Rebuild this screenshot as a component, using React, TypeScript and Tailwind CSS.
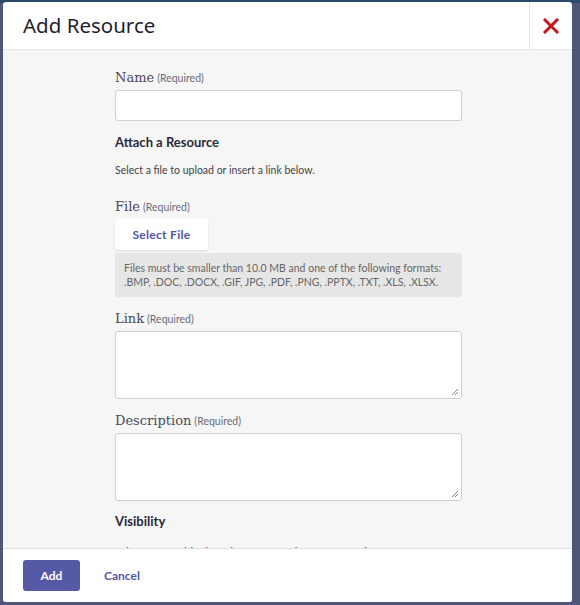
import React from "react";

const Label = ({ text }: { text: string }) => (
  <div className="flex items-baseline gap-[3px] text-[#4a4a55]">
    <span className="text-[13px]" style={{ fontFamily: '"DejaVu Serif", "Liberation Serif", serif' }}>
      {text}
    </span>
    <span className="text-[10.5px] text-[#6b6b78]">(Required)</span>
  </div>
);

const Resize = () => (
  <svg width="8" height="8" viewBox="0 0 8 8" className="absolute right-[2px] bottom-[2px]">
    <path d="M7 1 L1 7 M7 4 L4 7" stroke="#888" strokeWidth="1" />
  </svg>
);

export default function App() {
  return (
    <div
      className="w-[580px] h-[605px] bg-[#4f5677] overflow-hidden relative"
      style={{ fontFamily: 'Lato, "Open Sans", sans-serif' }}
    >
      <div className="absolute left-0 top-0 w-full h-[3px] bg-[#2c4a6b]" />
      <div className="absolute left-[3px] top-[2px] w-[569px] h-[600px] bg-white rounded-[3px] flex flex-col overflow-hidden">
        <div className="h-[48px] flex border-b border-[#e6e6e6] shrink-0">
          <div className="flex-1 flex items-center pl-[20px]">
            <h1 className="text-[20.5px] text-[#1f1f2e]" style={{ fontFamily: '"Noto Sans", sans-serif' }}>
              Add Resource
            </h1>
          </div>
          <div className="w-[43px] border-l border-[#e6e6e6] flex items-center justify-center">
            <svg width="16" height="16" viewBox="0 0 16 16">
              <path d="M2 2 L14 14 M14 2 L2 14" stroke="#c4161c" strokeWidth="3" strokeLinecap="square" />
            </svg>
          </div>
        </div>
        <div className="flex-1 bg-[#f6f6f6] overflow-hidden">
          <div className="ml-[112px] w-[347px] pt-[18px] flex flex-col">
            <Label text="Name" />
            <div className="mt-[2px] h-[31px] bg-white border border-[#cfcfdc] rounded-[3px]" />
            <div className="mt-[12px] text-[13px] font-bold text-[#2a2a38]">Attach a Resource</div>
            <div className="mt-[11px] text-[10.5px] text-[#444]">Select a file to upload or insert a link below.</div>
            <div className="mt-[18px]">
              <Label text="File" />
            </div>
            <div className="mt-[3px] w-[93px] h-[31px] bg-white rounded-[3px] shadow-[0_1px_2px_rgba(0,0,0,0.12)] flex items-center justify-center text-[12px] font-bold text-[#4f55a3] tracking-[0.3px]">
              Select File
            </div>
            <div className="mt-[3px] h-[44px] bg-[#e6e6e6] rounded-[2px] px-[9px] pt-[8px] text-[10.5px] leading-[14px] text-[#666]">
              Files must be smaller than 10.0 MB and one of the following formats:
              <br />
              .BMP, .DOC, .DOCX, .GIF, JPG, .PDF, .PNG, .PPTX, .TXT, .XLS, .XLSX.
            </div>
            <div className="mt-[12px]">
              <Label text="Link" />
            </div>
            <div className="mt-[2px] h-[68px] bg-white border border-[#cfcfdc] rounded-[3px] relative">
              <Resize />
            </div>
            <div className="mt-[12px]">
              <Label text="Description" />
            </div>
            <div className="mt-[3px] h-[68px] bg-white border border-[#cfcfdc] rounded-[3px] relative">
              <Resize />
            </div>
            <div className="mt-[11px] text-[13px] font-bold text-[#2a2a38]">Visibility</div>
            <div className="mt-[12px] text-[11px] text-[#444]">Who can see this shared Resource? Choose one option.</div>
          </div>
        </div>
        <div className="h-[54px] border-t border-[#e0e0e0] bg-white flex items-center pl-[20px] gap-[24px] shrink-0">
          <div className="w-[57px] h-[31px] bg-[#5559a6] rounded-[3px] flex items-center justify-center text-white text-[12px] font-bold">
            Add
          </div>
          <div className="text-[12px] font-bold text-[#5559a6]">Cancel</div>
        </div>
      </div>
    </div>
  );
}
